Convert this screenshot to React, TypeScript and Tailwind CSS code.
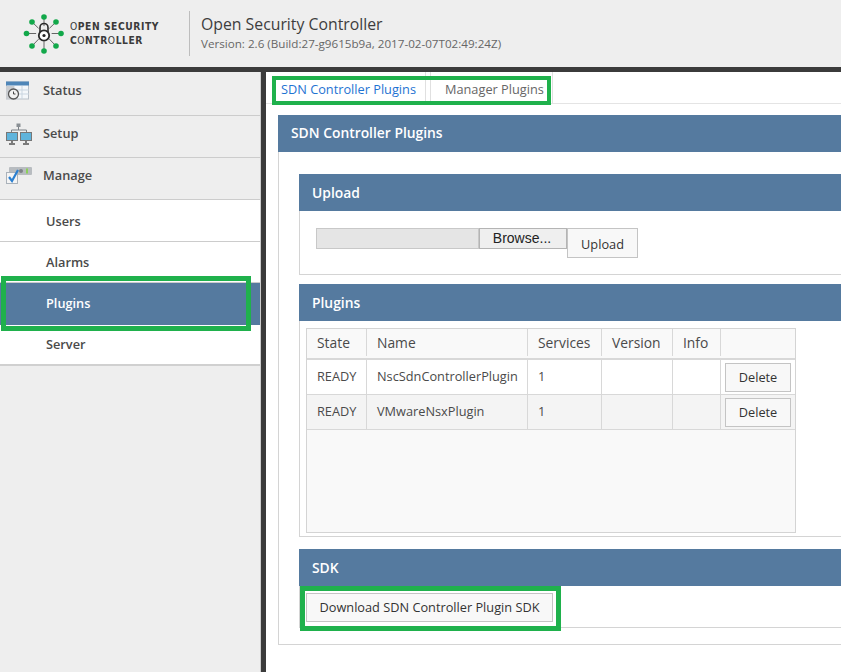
const font = { fontFamily: '"Open Sans", "Noto Sans", sans-serif' };

function Logo() {
  const dots = [
    [44, 17],
    [56, 22],
    [61, 33.5],
    [56, 46],
    [44, 51],
    [32, 46],
    [26.5, 33.5],
    [32, 22],
  ];
  const cx = 44;
  const cy = 33.5;
  return (
    <div className="flex w-[189px] h-full items-center shrink-0 relative">
      <svg width="70" height="67" viewBox="0 0 70 67" className="shrink-0">
        {dots.map((d, i) => {
          const dx = d[0] - cx;
          const dy = d[1] - cy;
          return (
            <line
              key={i}
              x1={cx + dx * 0.45}
              y1={cy + dy * 0.45}
              x2={d[0]}
              y2={d[1]}
              stroke="#666"
              strokeWidth="1"
            />
          );
        })}
        {dots.map((d, i) => (
          <circle key={i} cx={d[0]} cy={d[1]} r="2.8" fill="#12a84a" />
        ))}
        <path d="M40 32v-4.5a4 4 0 0 1 8 0V32" fill="none" stroke="#2b2b2b" strokeWidth="1.6" />
        <circle cx="44" cy="35.5" r="5.2" fill="#fff" stroke="#2b2b2b" strokeWidth="1.8" />
        <circle cx="44" cy="35.5" r="1.6" fill="#222" />
      </svg>
      <div
        className="text-[10px] leading-[14px] pt-[1px] font-bold text-[#3a3a3a] tracking-[0.6px] whitespace-nowrap"
        style={{ fontFamily: '"DejaVu Sans", sans-serif', transform: 'scaleX(0.92)', transformOrigin: 'left' }}
      >
        <div>
          <span className="font-normal">O</span>PEN SECURITY
        </div>
        <div>
          C<span className="font-normal">O</span>NTR<span className="font-normal">O</span>LLER
        </div>
      </div>
    </div>
  );
}

function StatusIcon() {
  return (
    <svg width="24" height="20" viewBox="0 0 24 20">
      <rect x="0.5" y="1" width="22" height="17" fill="#f4f7fa" stroke="#b9c0c8" />
      <rect x="0" y="0.5" width="23" height="4" fill="#4f86b8" />
      <path d="M8 5v13M16 5v13M8 9h15M8 13h15" stroke="#c9d5e0" />
      <rect x="0" y="5" width="8" height="13" fill="#c9ccd0" />
      <circle cx="7.5" cy="13" r="5" fill="#f2f2f2" stroke="#555" strokeWidth="1.3" />
      <path d="M7.5 10.5V13h2" stroke="#444" fill="none" />
    </svg>
  );
}

function SetupIcon() {
  return (
    <svg width="26" height="22" viewBox="0 0 26 22">
      <rect x="10.5" y="0.5" width="4" height="3.5" fill="#8a8f94" />
      <path d="M12.5 4v3M5.5 10V7h15v3" stroke="#7b8187" fill="none" />
      <rect x="0.5" y="9.5" width="11" height="8" fill="#5fb4dc" stroke="#777" />
      <rect x="14.5" y="9.5" width="11" height="8" fill="#5fb4dc" stroke="#777" />
      <path d="M6 18v2M3 21h6M20 18v2M17 21h6" stroke="#555" strokeWidth="1.5" />
    </svg>
  );
}

function ManageIcon() {
  return (
    <svg width="26" height="20" viewBox="0 0 26 20">
      <rect x="3" y="1" width="23" height="8" rx="1" fill="#b8bcc0" />
      <circle cx="15" cy="5" r="2" fill="#7d8286" />
      <rect x="20" y="2.5" width="2" height="5" fill="#8bd05a" />
      <rect x="0.5" y="6.5" width="11" height="11" fill="#f4f4f4" stroke="#aab2ba" />
      <path d="M3 11l3 4 6-11" fill="none" stroke="#2a7fd0" strokeWidth="2.2" />
    </svg>
  );
}

function NavHead({ icon, label, h }: { icon: React.ReactNode; label: string; h: string }) {
  return (
    <div className={`${h} pb-[6px] flex items-center border-b border-[#ccc] font-semibold text-[12.75px] text-[#4a4a4a]`}>
      <div className="w-[43px] pl-[6px] shrink-0 flex">{icon}</div>
      <span>{label}</span>
    </div>
  );
}

function NavItem({ label, h, active, noBorder, flat }: { label: string; h: string; active?: boolean; noBorder?: boolean; flat?: boolean }) {
  return (
    <div
      className={`${h} flex items-center pl-[46px] font-semibold text-[12.75px] ${
        active ? 'bg-[#557a9f] text-white' : 'bg-white text-[#4a4a4a]'
      } ${active || flat ? '' : 'pt-[2px]'} ${noBorder ? '' : 'border-b border-[#ccc]'}`}
    >
      {label}
    </div>
  );
}

function Bar({ title, extra = 'pt-[2px]' }: { title: string; extra?: string }) {
  return (
    <div className={`h-[37px] pl-[13px] ${extra} bg-[#557a9f] text-white font-semibold text-[13.85px] flex items-center`}>{title}</div>
  );
}

function Row({ name, alt }: { name: string; alt?: boolean }) {
  const cell = 'border-r border-[#d8d8d8] flex items-center pl-[10px] shrink-0';
  return (
    <div className={`flex h-[35px] border-b border-[#d8d8d8] text-[12.75px] text-[#4a4a4a] ${alt ? 'bg-[#f4f4f4]' : 'bg-white'}`}>
      <div className={`${cell} w-[60px]`}>READY</div>
      <div className={`${cell} w-[161px]`}>{name}</div>
      <div className={`${cell} w-[74px]`}>1</div>
      <div className={`${cell} w-[71px]`} />
      <div className={`${cell} w-[48px]`} />
      <div className="flex-1 flex items-center pl-[4px]">
        <div className="w-[66px] h-[29px] pt-[2px] border border-[#c4c4c4] bg-[#f8f8f8] text-[#333] flex items-center justify-center">
          Delete
        </div>
      </div>
    </div>
  );
}

function HeadCell({ label, w }: { label: string; w: string }) {
  return (
    <div className={`${w} shrink-0 pl-[10px] pt-[2px] h-[27px] flex items-center border-r border-[#d8d8d8]`}>{label}</div>
  );
}

export default function App() {
  return (
    <div className="relative w-[841px] h-[672px] overflow-hidden bg-white" style={font}>
      <header className="h-[67px] bg-[#eeeeee] flex">
        <Logo />
        <div className="my-[11px] border-l border-[#bdbdbd] pl-[11px] pb-[2px] flex flex-col justify-center">
          <div className="text-[15.8px] leading-[22px] text-[#3d3d3d]">Open Security Controller</div>
          <div className="text-[11.65px] leading-[17px] text-[#666]">Version: 2.6 (Build:27-g9615b9a, 2017-02-07T02:49:24Z)</div>
        </div>
      </header>
      <div className="h-[5px] bg-[#3b3b3b]" />

      <div className="flex h-[600px]">
        <aside className="w-[261px] shrink-0 bg-[#eeeeee] border-r border-[#ccc]">
          <NavHead h="h-[44px]" label="Status" icon={<StatusIcon />} />
          <NavHead h="h-[42px]" label="Setup" icon={<SetupIcon />} />
          <NavHead h="h-[42px]" label="Manage" icon={<ManageIcon />} />
          <NavItem h="h-[42px]" label="Users" />
          <NavItem h="h-[41px]" label="Alarms" />
          <NavItem h="h-[42px]" label="Plugins" active noBorder />
          <div className="border-b-2 border-[#d0d0d0]">
            <NavItem h="h-[39px]" label="Server" noBorder flat />
          </div>
        </aside>
        <div className="w-[5px] shrink-0 bg-[#3b3b3b]" />

        <main className="flex-1 min-w-0">
          <div className="h-[32px] flex border-b border-[#e4e4e4] text-[12.75px]">
            <div className="w-[160px] shrink-0 pl-[15px] pt-[5px] flex items-center text-[#1e73d2] border-r border-[#e0e0e0] h-[31px]">
              SDN Controller Plugins
            </div>
            <div className="w-[4px]" />
            <div className="w-[123px] shrink-0 pl-[14px] pt-[5px] flex items-center text-[#666] border-x border-[#e0e0e0] h-[31px]">
              Manager Plugins
            </div>
          </div>

          <div className="ml-[12px] mt-[11px] w-[600px]">
            <Bar title="SDN Controller Plugins" extra="" />
            <div className="border border-[#d4d4d4] border-t-0 h-[493px] pl-[20px] pt-[22px]">
              <Bar title="Upload" />
              <div className="h-[64px] border border-t-0 border-[#d4d4d4] pl-[16px] pt-[17px] flex items-start">
                <div className="w-[163px] h-[21px] bg-[#e5e5e5] border border-[#c8c8c8]" />
                <div
                  className="w-[88px] h-[21px] pr-[2px] border border-[#b4b4b4] bg-[#efefef] text-[14px] text-[#222] flex items-center justify-center"
                  style={{ fontFamily: '"Liberation Sans", sans-serif' }}
                >
                  Browse...
                </div>
                <div className="w-[71px] h-[30px] pt-[3px] border border-[#c4c4c4] bg-[#f8f8f8] text-[12.75px] text-[#333] flex items-center justify-center">
                  Upload
                </div>
              </div>

              <div className="mt-[9px]">
                <Bar title="Plugins" />
                <div className="h-[216px] border border-t-0 border-[#d4d4d4] pl-[6px] pt-[7px]">
                  <div className="w-[490px] h-[205px] border border-[#d4d4d4] bg-[#f9f9f9]">
                    <div className="flex h-[31px] border-b-2 border-[#d8d8d8] text-[13.85px] text-[#4a4a4a]">
                      <HeadCell label="State" w="w-[60px]" />
                      <HeadCell label="Name" w="w-[161px]" />
                      <HeadCell label="Services" w="w-[74px]" />
                      <HeadCell label="Version" w="w-[71px]" />
                      <HeadCell label="Info" w="w-[48px]" />
                    </div>
                    <Row name="NscSdnControllerPlugin" />
                    <Row name="VMwareNsxPlugin" alt />
                  </div>
                </div>
              </div>

              <div className="mt-[12px]">
                <Bar title="SDK" />
                <div className="h-[42px] border border-t-0 border-[#d4d4d4] pl-[6px] pt-[7px]">
                  <div className="w-[247px] h-[29px] pt-[1px] border border-[#c4c4c4] bg-[#f8f8f8] text-[12.75px] text-[#333] flex items-center justify-center whitespace-nowrap">
                    Download SDN Controller Plugin SDK
                  </div>
                </div>
              </div>
            </div>
          </div>
        </main>
      </div>

      <div className="absolute left-[1px] top-[276px] w-[250px] h-[55px] border-[5px] border-[#1fb14c]" />
      <div className="absolute left-[272px] top-[76px] w-[279px] h-[29px] border-[4px] border-[#1fb14c]" />
      <div className="absolute left-[300px] top-[586px] w-[261px] h-[45px] border-[5px] border-[#1fb14c]" />
    </div>
  );
}
